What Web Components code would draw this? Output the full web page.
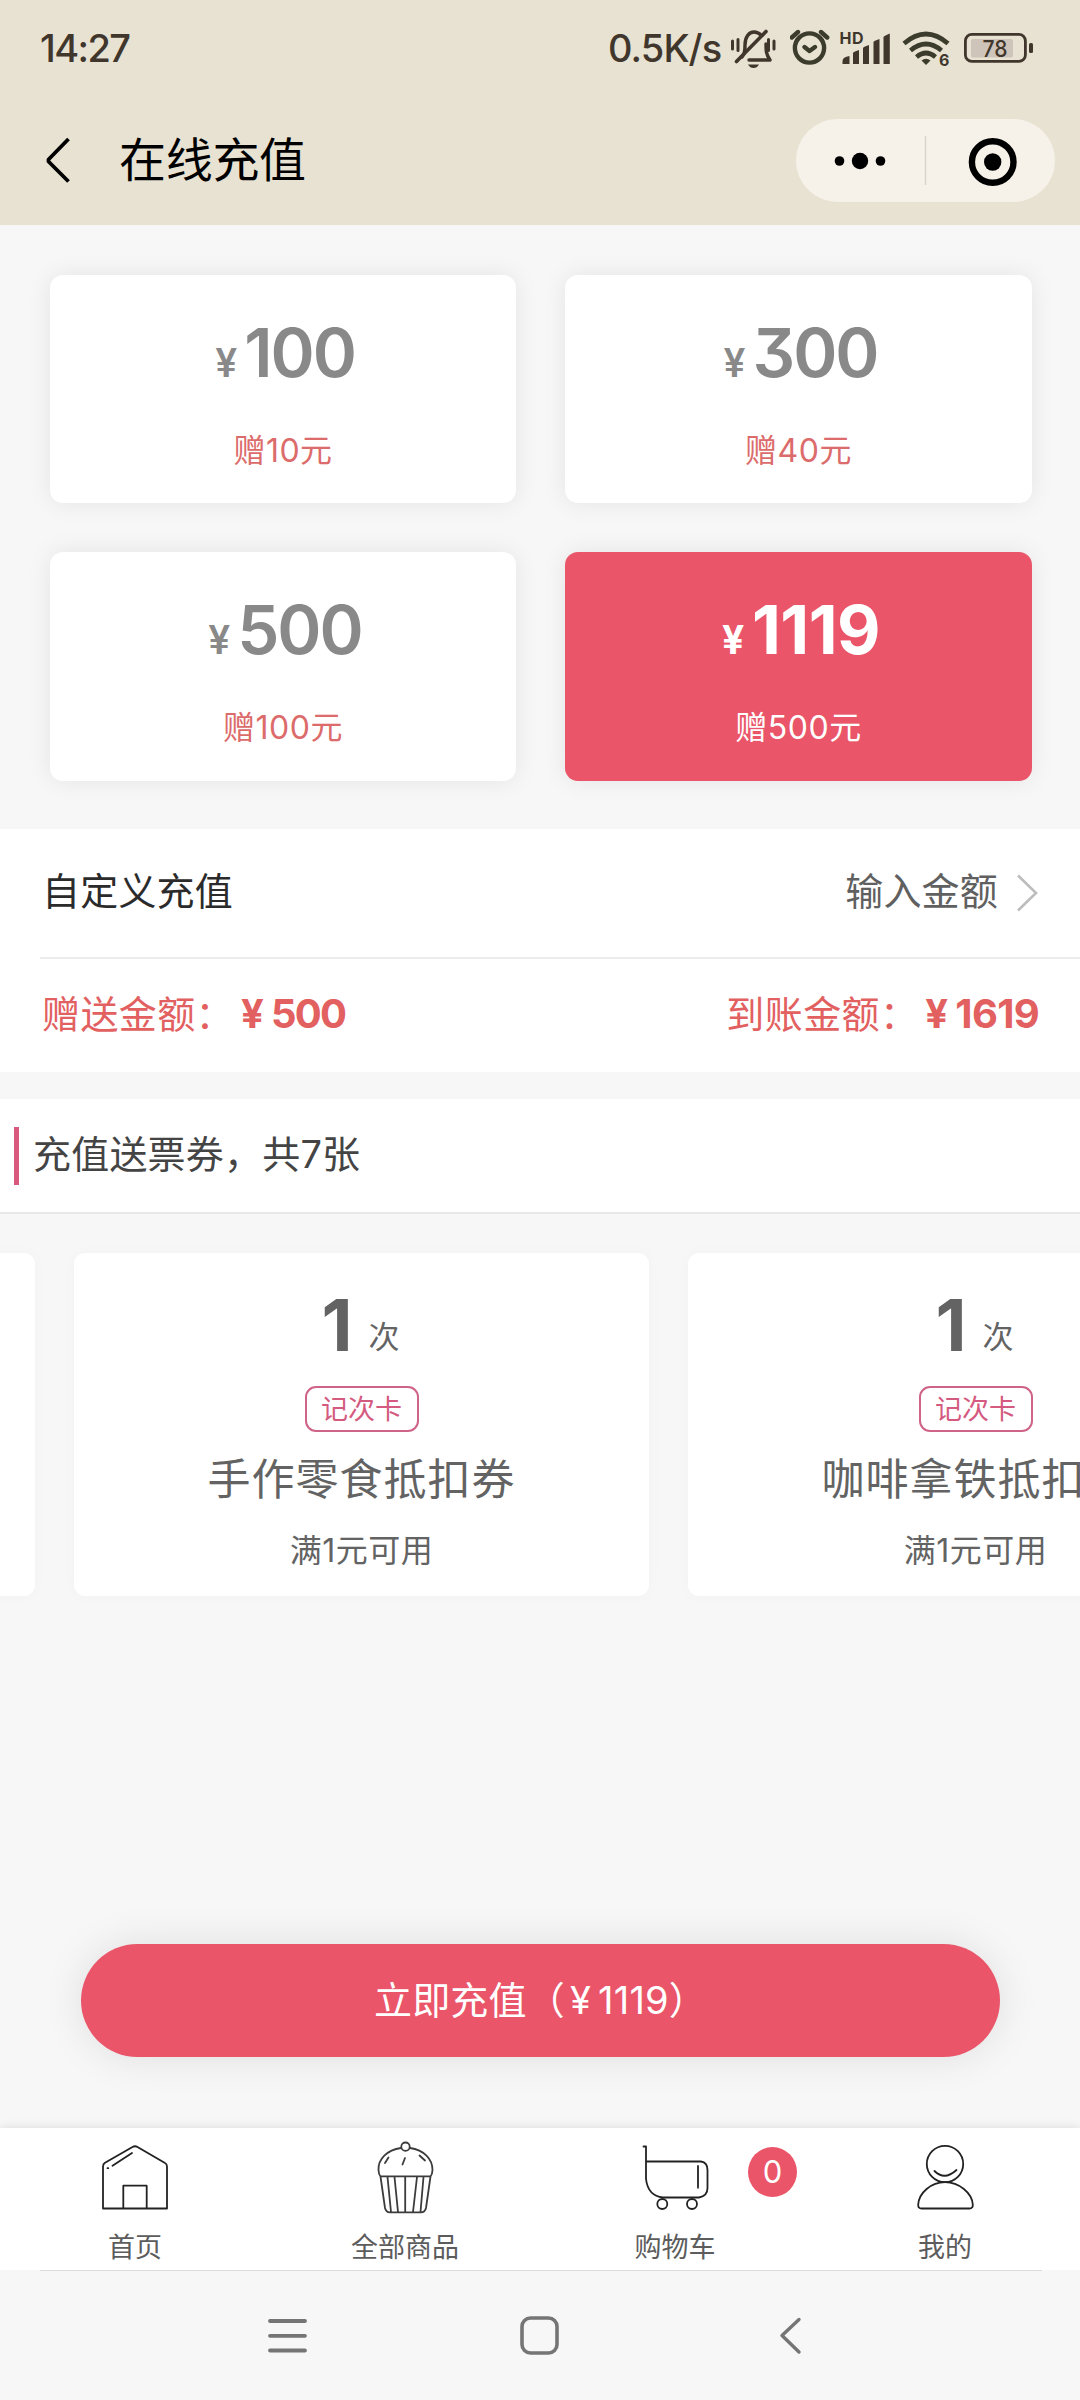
<!DOCTYPE html>
<html lang="zh-CN">
<head>
<meta charset="utf-8">
<title>在线充值</title>
<style>
  html, body { margin: 0; padding: 0; }
  body {
    width: 1080px; height: 2400px; overflow: hidden; background: #f7f7f7;
    font-family: Inter, "Noto Sans CJK SC", sans-serif;
    --accent: #ea5569; --red: #e2605f; --pink: #d45a80;
  }
</style>
</head>
<body>
<recharge-app></recharge-app>
<script>
function define(name, html) {
  const t = document.createElement('template');
  t.innerHTML = html;
  customElements.define(name, class extends HTMLElement {
    constructor() {
      super();
      this.attachShadow({ mode: 'open' }).appendChild(t.content.cloneNode(true));
    }
  });
}

define('status-bar', `
<style>
  :host { display: flex; height: 96px; color: #40362c; align-items: flex-start; box-sizing: border-box; padding-left: 40px; font-weight: 450; }
  .t { height: 96px; line-height: 96px; white-space: nowrap; }
  .time { font-size: 38px; width: 568px; letter-spacing: -1.6px; }
  .speed { font-size: 38px; width: 122px; letter-spacing: -0.9px; }
  svg { display: block; flex: none; }
</style>
<div class="t time">14:27</div>
<div class="t speed">0.5K/s</div>
<svg width="60" height="96" viewBox="730 0 60 96" fill="none" stroke="#40362c" stroke-width="3" stroke-linecap="round">
  <path d="M742 57c3-3 3-7 3-12 0-8 4-13 9-13 3 0 5 1 7 3" stroke-width="3.4"/>
  <path d="M766 44c0 7 0 10 4 16H749" stroke-width="3.4" stroke-linejoin="round"/>
  <path d="M736.500 61.500 766 31.500" stroke-width="3.6"/>
  <path d="M732.500 41v8M738 39.500v11M768.500 39.500v11M774 41v8"/>
  <path d="M748 64.500h11q-2 3.500-5.500 3.500t-5.500-3.500z" fill="#40362c" stroke="none"/>
</svg>
<svg width="50" height="96" viewBox="790 0 50 96" fill="none" stroke="#3c3c2d" stroke-width="4.400" stroke-linecap="round" stroke-linejoin="round">
  <circle cx="809.500" cy="48" r="14.600"/>
  <path d="M804.500 47 809.500 51 815 47M791.800 37.500l6.200-5.500M827.200 37.500l-6.200-5.500"/>
</svg>
<svg width="60" height="96" viewBox="840 0 60 96" fill="#40362c">
  <text x="839.500" y="44" font-size="16" font-weight="700" font-family="Inter, sans-serif" textLength="24">HD</text>
  <path d="M842.500 64v-3q0-4 7-5v8zM853 64V53q0-1 6-3v14zM863 64V48q0-1 6-3v19zM873.500 64V42q0-1 6-3v25zM883.500 64V37q0-1 6.300-3.500V64z"/>
</svg>
<svg width="60" height="96" viewBox="900 0 60 96" fill="none" stroke="#3c3c2d" stroke-width="4.600">
  <path d="M904 43.500Q926 24.500 948 43.500M910.500 50.500Q926 37.500 941.500 50.500M916.500 57Q926 49 935.500 57"/>
  <path d="M921.500 60.500q4.500-3.500 9 0l-4.500 4.500z" fill="#3c3c2d" stroke="none"/>
  <text x="939" y="66" font-size="16" font-weight="700" fill="#40362c" stroke="none" font-family="Inter, sans-serif">6</text>
</svg>
<svg width="80" height="96" viewBox="960 0 80 96">
  <rect x="971" y="39" width="42" height="18.500" rx="2" fill="#cfc4b9"/>
  <rect x="965.400" y="34.400" width="60" height="27" rx="6.500" fill="none" stroke="#40362c" stroke-width="2.800"/>
  <rect x="1029" y="43" width="4" height="10" rx="1.500" fill="#40362c"/>
  <text x="995" y="56.500" text-anchor="middle" font-size="23" font-weight="450" fill="#40362c" font-family="Inter, sans-serif" textLength="25" lengthAdjust="spacingAndGlyphs">78</text>
</svg>`);

define('nav-header', `
<style>
  :host { display: flex; height: 129px; align-items: flex-start; padding: 0 25px 0 40px; }
  .back { margin-top: 34px; }
  .title { flex: 1; margin-left: 39px; height: 130px; line-height: 128px; font-size: 47px; letter-spacing: -.3px; color: #000; }
  .capsule { display: flex; align-items: center; width: 259px; height: 83px; margin-top: 23px; border-radius: 42px; background: #f6f2e9; }
  svg { display: block; flex: none; }
</style>
<svg class="back" width="40" height="60" viewBox="0 0 40 60" fill="none" stroke="#000" stroke-width="3.800"><path d="M28.500 9 8.500 29.500V31.500L28.500 51.500" stroke-linejoin="round"/></svg>
<div class="title"><slot></slot></div>
<div class="capsule">
  <svg width="259" height="83" viewBox="796 119 259 83">
    <circle cx="839.500" cy="161" r="4.800"/><circle cx="860" cy="161" r="8.200"/><circle cx="880.500" cy="161" r="4.800"/>
    <path d="M925.500 136v49" stroke="#d8d4cb" stroke-width="1.400"/>
    <circle cx="992.700" cy="162" r="20.800" fill="none" stroke="#000" stroke-width="6.400"/><circle cx="992.700" cy="162" r="8.700"/>
  </svg>
</div>`);

define('amount-card', `
<style>
  :host { display: flex; flex-direction: column; align-items: center; border-radius: 13px; background: #fff; color: #898989; box-shadow: 0 0 24px rgba(0,0,0,.08); --gift: #dc6b6b; }
  :host([selected]) { background: var(--accent); color: #fff; --gift: #fff; }
  .price { display: flex; align-items: baseline; height: 80px; margin-top: 38px; font-weight: 600; font-size: 67px; line-height: 80px; letter-spacing: -2px; font-feature-settings: "cv09"; padding-left: 4px; }
  .price i { font-style: normal; font-size: 39px; letter-spacing: 0; width: 29px; display: block; }
  :host([selected]) .price { font-weight: 700; letter-spacing: -.5px; padding-left: 5px; }
  :host([selected]) .price i { width: 30px; }
  .gift { font-size: 32px; height: 40px; line-height: 40px; margin-top: 38px; color: var(--gift); letter-spacing: .5px; white-space: nowrap; }
</style>
<div class="price"><i>¥</i><slot></slot></div>
<div class="gift"><slot name="gift"></slot></div>`);

define('amount-grid', `
<style>
  :host { display: grid; grid-template-columns: 466px 467px; grid-template-rows: 228px 229px; gap: 49px; padding: 50px 48px 48px 50px; }
</style><slot></slot>`);

define('amount-panel', `
<style>
  :host { display: block; height: 243px; background: #fff; }
  .row { display: flex; align-items: center; justify-content: space-between; font-size: 38px; line-height: 46px; letter-spacing: .2px; }
  .row span { padding-bottom: 4px; }
  .custom { height: 128px; margin-left: 40px; padding-right: 42px; border-bottom: 2px solid #ececec; color: #2b2b2b; padding-left: 2px; }
  .enter { display: flex; align-items: center; gap: 18px; color: #606060; }
  .sum { height: 113px; padding: 0 41px 0 42px; color: var(--red); letter-spacing: .4px; }
  .pair { display: flex; align-items: baseline; }
  b { font-weight: 700; font-size: 40px; letter-spacing: -.7px; font-feature-settings: "cv09"; display: flex; }
  b.narrow { letter-spacing: -1.800px; }
  b i { font-style: normal; width: 30px; }
  .k { width: 199px; }
  svg { display: block; }
</style>
<div class="row custom"><span>自定义充值</span>
  <div class="enter"><span>输入金额</span><svg width="22" height="38" viewBox="0 0 22 38" fill="none" stroke="#bdbdbd" stroke-width="2.600"><path d="M2 1.500 20 19 2 36.500"/></svg></div>
</div>
<div class="row sum">
  <div class="pair"><span class="k">赠送金额：</span><b class="narrow"><i>¥</i><slot name="gift"></slot></b></div>
  <div class="pair"><span class="k">到账金额：</span><b><i>¥</i><slot name="total"></slot></b></div>
</div>`);

define('section-title', `
<style>
  :host { display: flex; align-items: center; height: 113px; margin-top: 27px; padding-left: 14px; background: #fff; border-bottom: 2px solid #e8e8e8; font-size: 38px; letter-spacing: .2px; color: #444; }
  .bar { width: 5px; height: 58px; margin-right: 14px; background: #d9587d; }
  span { line-height: 46px; padding-bottom: 4px; }
</style><div class="bar"></div><span><slot></slot></span>`);

define('coupon-strip', `
<style>
  :host { display: flex; gap: 39px; height: 343px; margin-top: 39px; margin-left: -540px; width: 1620px; }
</style><slot></slot>`);

define('coupon-card', `
<style>
  :host { display: flex; flex: none; flex-direction: column; align-items: center; width: 575px; height: 343px; border-radius: 11px; background: #fff; box-shadow: 0 0 16px rgba(0,0,0,.025); color: #636363; white-space: nowrap; }
  :host([blank]) > * { display: none; }
  .count { display: flex; align-items: flex-start; justify-content: center; height: 90px; margin-top: 27px; padding-right: 2px; }
  .count b { font-size: 72px; line-height: 90px; font-weight: 700; margin-right: 16px; }
  .count span { font-size: 31px; line-height: 40px; padding-top: 37px; }
  .tag { height: 42px; line-height: 44px; padding: 0 14.500px; border: 2px solid #cf6388; border-radius: 11px; margin-top: 16px; font-size: 27px; color: var(--pink); }
  .name { font-size: 43px; letter-spacing: 1px; height: 50px; line-height: 50px; margin-top: 22px; }
  .cond { font-size: 32px; height: 40px; line-height: 40px; margin-top: 27px; letter-spacing: .5px; }
</style>
<div class="count"><b>1</b><span>次</span></div>
<div class="tag">记次卡</div>
<div class="name"><slot></slot></div>
<div class="cond">满1元可用</div>`);

define('pay-button', `
<style>
  :host { display: block; width: 919px; height: 113px; line-height: 112px; margin: 348px 0 0 81px; border-radius: 57px; background: var(--accent); color: #fff; text-align: center; font-size: 38px; letter-spacing: .2px; box-shadow: 0 0 42px rgba(0,0,0,.1); }
  ::slotted(span) { margin: 0 7px 0 5px; }
</style><slot></slot>`);

define('tab-item', `
<style>
  :host { position: relative; display: flex; flex-direction: column; align-items: center; width: 270px; color: #5c5c5c; font-size: 27px; }
  .icon { height: 97px; }
  .label { height: 45px; line-height: 46px; }
</style>
<div class="icon"><slot name="icon"></slot></div><div class="label"><slot></slot></div><slot name="badge"></slot>`);

define('count-badge', `
<style>
  :host { position: absolute; left: 208px; top: 19px; width: 49px; height: 50px; border-radius: 50%; background: var(--accent); color: #fff; text-align: center; line-height: 50px; font-size: 31px; }
</style><slot></slot>`);

define('line-icon', `
<style>:host { display: block; } svg { display: block; }</style><svg width="80" height="96" viewBox="0 0 80 96" fill="none" stroke="#222" stroke-width="1.800" stroke-linecap="round" stroke-linejoin="round"></svg>`);

const shapes = {
  home: '<path d="M8 80.500V38.500Q8 36 10 34.800L37.500 19Q40 17.500 42.500 19L70 35Q72 36 72 38.500V80.500ZM28.300 80V57.700H51.700V80M17.500 37.800 37 25M12.500 40.200h.8"/>',
  cake: '<g stroke="#3c3c3c"><circle cx="40.500" cy="18.700" r="4.200"/><path d="M36 20C22 22 13 31 13.500 42Q13.700 46.500 15.500 48.400H65.500Q67.300 46.500 67.500 42C67.500 31 59 22 45 20M15.500 48.500 20 80Q21 84.300 25 84.300H56Q60 84.300 61 80L65.500 48.500M22.500 49 26 84M29.500 49 33 84M40.200 49V84M52 49 48 84M58.500 49 55.500 84M23.500 29.500 20 35M40 30 37.500 36.500M54.500 27.500 60 32.500"/></g>',
  cart: '<path d="M8.500 18.500H11V51Q13 68 28 69.500H64Q72.500 68 72.500 60V42Q72.500 34.500 66 33.500H11M63 38V58.500M63 59.500v.3"/><circle cx="27.300" cy="76" r="5"/><circle cx="57" cy="76" r="5"/>',
  user: '<circle cx="40" cy="36" r="18.200"/><path d="M29.500 43Q39.500 53 51.500 42M40 54.200C26 54.200 14 65 13.200 76.500Q13 80.500 16.500 80.500H64.500Q68 80.500 67.800 76.500C67 65 54 54.200 40 54.200Z"/>'
};
document.addEventListener('DOMContentLoaded', paintIcons);
function paintIcons() {
  const walk = root => root.querySelectorAll('*').forEach(el => {
    if (el.localName === 'line-icon') el.shadowRoot.querySelector('svg').innerHTML = shapes[el.getAttribute('name')];
    if (el.shadowRoot) walk(el.shadowRoot);
  });
  walk(document);
}

define('tab-bar', `
<style>
  :host { display: flex; position: relative; height: 142px; margin-top: 71px; background: #fff; box-shadow: 0 0 10px rgba(0,0,0,.12); }
</style><slot></slot>`);

define('system-nav', `
<style>
  :host { display: block; position: relative; height: 130px; background: #f7f7f7; }
  .rule { height: 1px; margin: 0 38px 0 40px; background: #dcdcdc; }
  .keys { display: flex; justify-content: space-between; padding: 42px 277px 0 265px; }
  .home { margin-right: 8px; }
</style>
<div class="rule"></div>
<div class="keys">
<svg width="46" height="46" fill="none" stroke="#757575" stroke-width="3.800" stroke-linecap="round"><path d="M5 8h35M5 22.800h35M5 37.500h35"/></svg>
<svg class="home" width="46" height="46" fill="none" stroke="#757575" stroke-width="3.600"><rect x="5" y="5" width="35" height="35" rx="8.500"/></svg>
<svg width="26" height="46" fill="none" stroke="#757575" stroke-width="3.400" stroke-linecap="round" stroke-linejoin="round"><path d="M22 6.500 5 22.500 22 39"/></svg>
</div>`);

define('recharge-app', `
<style>
  :host { display: flex; flex-direction: column; height: 2400px; overflow: hidden; background: #f7f7f7; }
  header { height: 225px; background: #e8e2d3; }
</style>
<header><status-bar></status-bar><nav-header>在线充值</nav-header></header>
<amount-grid>
  <amount-card>100<span slot="gift">赠10元</span></amount-card>
  <amount-card>300<span slot="gift">赠40元</span></amount-card>
  <amount-card>500<span slot="gift">赠100元</span></amount-card>
  <amount-card selected>1119<span slot="gift">赠500元</span></amount-card>
</amount-grid>
<amount-panel><span slot="gift">500</span><span slot="total">1619</span></amount-panel>
<section-title>充值送票券，共7张</section-title>
<coupon-strip>
  <coupon-card blank></coupon-card>
  <coupon-card>手作零食抵扣券</coupon-card>
  <coupon-card>咖啡拿铁抵扣券</coupon-card>
</coupon-strip>
<pay-button>立即充值（<span>¥</span>1119）</pay-button>
<tab-bar>
  <tab-item><line-icon slot="icon" name="home"></line-icon>首页</tab-item>
  <tab-item><line-icon slot="icon" name="cake"></line-icon>全部商品</tab-item>
  <tab-item><line-icon slot="icon" name="cart"></line-icon>购物车<count-badge slot="badge">0</count-badge></tab-item>
  <tab-item><line-icon slot="icon" name="user"></line-icon>我的</tab-item>
</tab-bar>
<system-nav></system-nav>`);
</script>
</body>
</html>
